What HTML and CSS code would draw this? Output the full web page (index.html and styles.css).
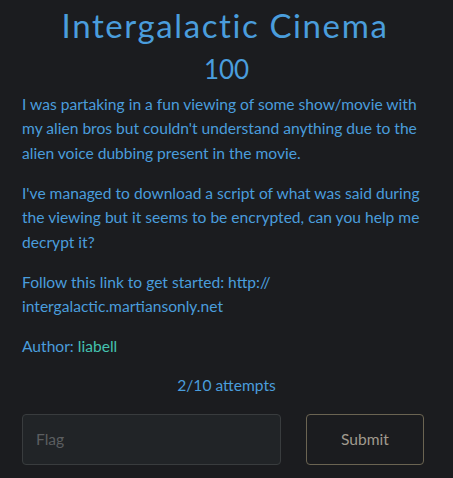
FILE: index.html
```html
<!DOCTYPE html>
<html lang="en">
<head>
  <meta charset="UTF-8" />
  <meta name="viewport" content="width=device-width, initial-scale=1.0" />
  <title>Intergalactic Cinema</title>
  <link rel="stylesheet" href="styles.css">
</head>
<body>
  <div class="challenge">
    <h1 class="name">Intergalactic Cinema</h1>
    <h2 class="value">100</h2>
    <div class="desc">
      <p>I was partaking in a fun viewing of some show/movie with my alien bros but couldn't understand anything due to the alien voice dubbing present in the movie.</p>
      <p>I've managed to download a script of what was said during the viewing but it seems to be encrypted, can you help me decrypt it?</p>
      <p>Follow this link to get started: http:// intergalactic.martiansonly.net</p>
      <p>Author: <span class="author">liabell</span></p>
    </div>
    <p class="attempts">2/10 attempts</p>
    <form class="submit-row">
      <input type="text" class="flag" placeholder="Flag" />
      <button type="button" class="submit">Submit</button>
    </form>
  </div>
</body>
</html>
```

FILE: styles.css
```css
body {
  margin: 0;
  background: #1b1c1f;
  font-family: Lato, "Open Sans", sans-serif;
  color: #4a9ddc;
}
.challenge {
  padding: 0 22px;
}
.name {
  margin: 6px 0 0;
  padding-right: 3px;
  text-align: center;
  font-size: 33px;
  font-weight: 400;
  letter-spacing: 1.6px;
  line-height: 1.2;
  color: #4a9ddc;
}
.value {
  margin: 8px 0 0;
  text-align: center;
  font-size: 26px;
  font-weight: 400;
  line-height: 1.2;
}
.desc {
  margin-top: 7px;
}
.desc p {
  margin: 0 0 15.5px;
  font-size: 15.6px;
  line-height: 24.5px;
}
.author {
  color: #44c2b0;
}
.attempts {
  text-align: center;
  font-size: 15.6px;
  margin: 17px 0 0;
}
.submit-row {
  display: flex;
  gap: 25px;
  margin-top: 20px;
}
.flag {
  width: 259px;
  height: 51px;
  box-sizing: border-box;
  background: #212427;
  border: 1px solid #393c3e;
  border-radius: 4px;
  padding: 0 13px;
  font-family: Lato, sans-serif;
  font-size: 15.6px;
  color: #ccc;
}
.flag::placeholder {
  color: #5b5e60;
}
.submit {
  width: 118px;
  height: 51px;
  background: transparent;
  border: 1px solid #6b6452;
  border-radius: 4px;
  font-family: Lato, sans-serif;
  font-size: 15.6px;
  color: #a09a8e;
}
```
